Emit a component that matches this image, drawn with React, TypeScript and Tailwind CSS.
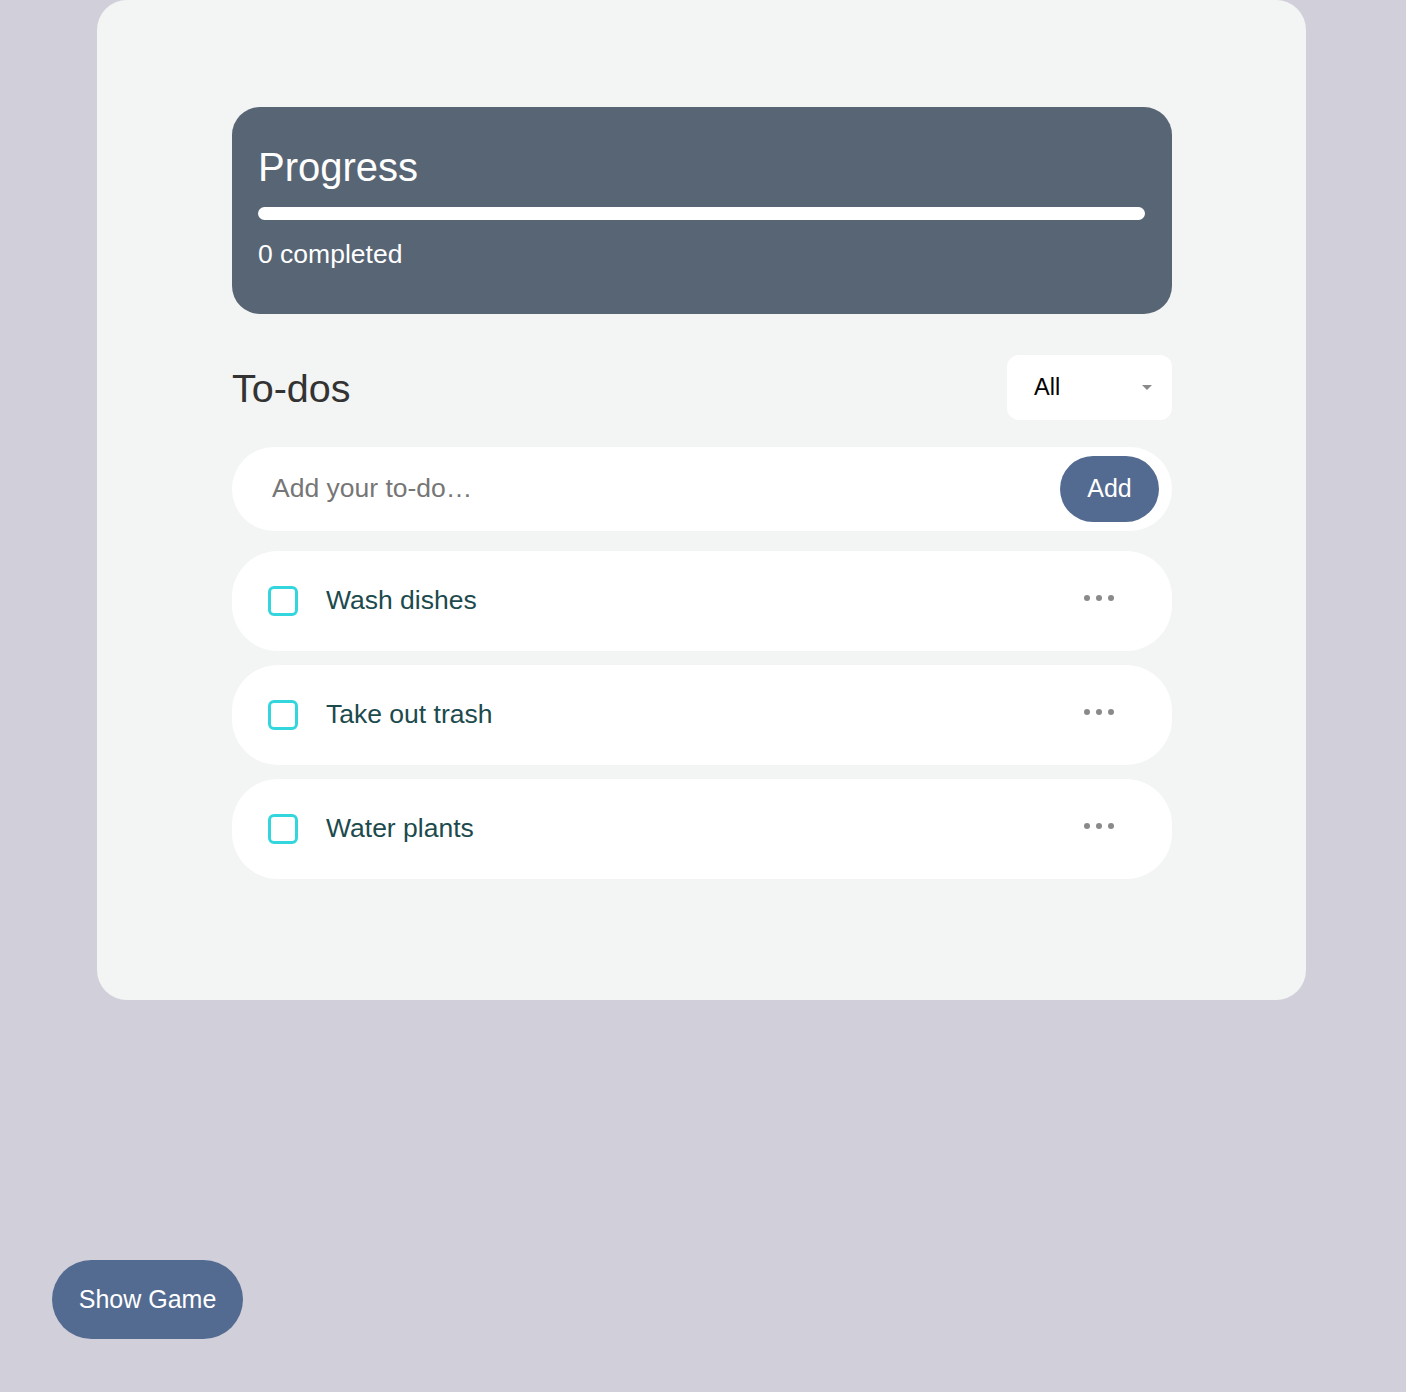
import React from "react";

const todos = ["Wash dishes", "Take out trash", "Water plants"];

function Dots() {
  return (
    <div className="flex items-center gap-[6px] -mt-[6px]">
      <span className="block w-[6px] h-[6px] rounded-full bg-[#8a8a8a]" />
      <span className="block w-[6px] h-[6px] rounded-full bg-[#8a8a8a]" />
      <span className="block w-[6px] h-[6px] rounded-full bg-[#8a8a8a]" />
    </div>
  );
}

export default function App() {
  const font = { fontFamily: '"Liberation Sans", Arial, Helvetica, sans-serif' };
  return (
    <div className="min-h-[1392px] w-full bg-[#d1cfda]" style={font}>
      <div className="ml-[97px] w-[1209px] h-[1000px] bg-[#f3f5f4] rounded-[30px] pt-[107px] pl-[135px] pr-[134px]">
        <div className="h-[207px] rounded-[28px] bg-[#586574] pl-[26px] pr-[27px] pt-[36px]">
          <div className="text-[40px] leading-[48px] text-white">Progress</div>
          <div className="mt-[16px] h-[13px] rounded-full bg-white" />
          <div className="mt-[18px] text-[26.5px] leading-[32px] text-white">0 completed</div>
        </div>

        <div className="mt-[41px] flex items-center justify-between h-[65px]">
          <div className="text-[39.5px] leading-[44px] text-[#333333]">To-dos</div>
          <div className="w-[165px] h-[65px] rounded-[12px] bg-white flex items-center justify-between pl-[27px] pr-[20px]">
            <span className="text-[23.5px] text-black">All</span>
            <span className="block w-0 h-0 border-l-[5px] border-r-[5px] border-t-[5px] border-l-transparent border-r-transparent border-t-[#8a8a8a]" />
          </div>
        </div>

        <div className="mt-[27px] h-[84px] rounded-full bg-white flex items-center justify-between pl-[40px] pr-[13px]">
          <span className="text-[26.5px] text-[#767676]">Add your to-do…</span>
          <button className="w-[99px] h-[66px] rounded-full bg-[#546b91] text-white text-[25px]">Add</button>
        </div>

        <div className="mt-[20px] flex flex-col gap-[14px]">
          {todos.map((t) => (
            <div key={t} className="h-[100px] rounded-[46px] bg-white flex items-center pl-[36px] pr-[58px]">
              <span className="block w-[30px] h-[30px] rounded-[6px] border-[3px] border-[#33d6dc]" />
              <span className="ml-[28px] text-[26.5px] text-[#1c4a4d] flex-1">{t}</span>
              <Dots />
            </div>
          ))}
        </div>
      </div>

      <button className="fixed left-[52px] bottom-[53px] w-[191px] h-[79px] rounded-full bg-[#546b91] text-white text-[25px]">
        Show Game
      </button>
    </div>
  );
}
